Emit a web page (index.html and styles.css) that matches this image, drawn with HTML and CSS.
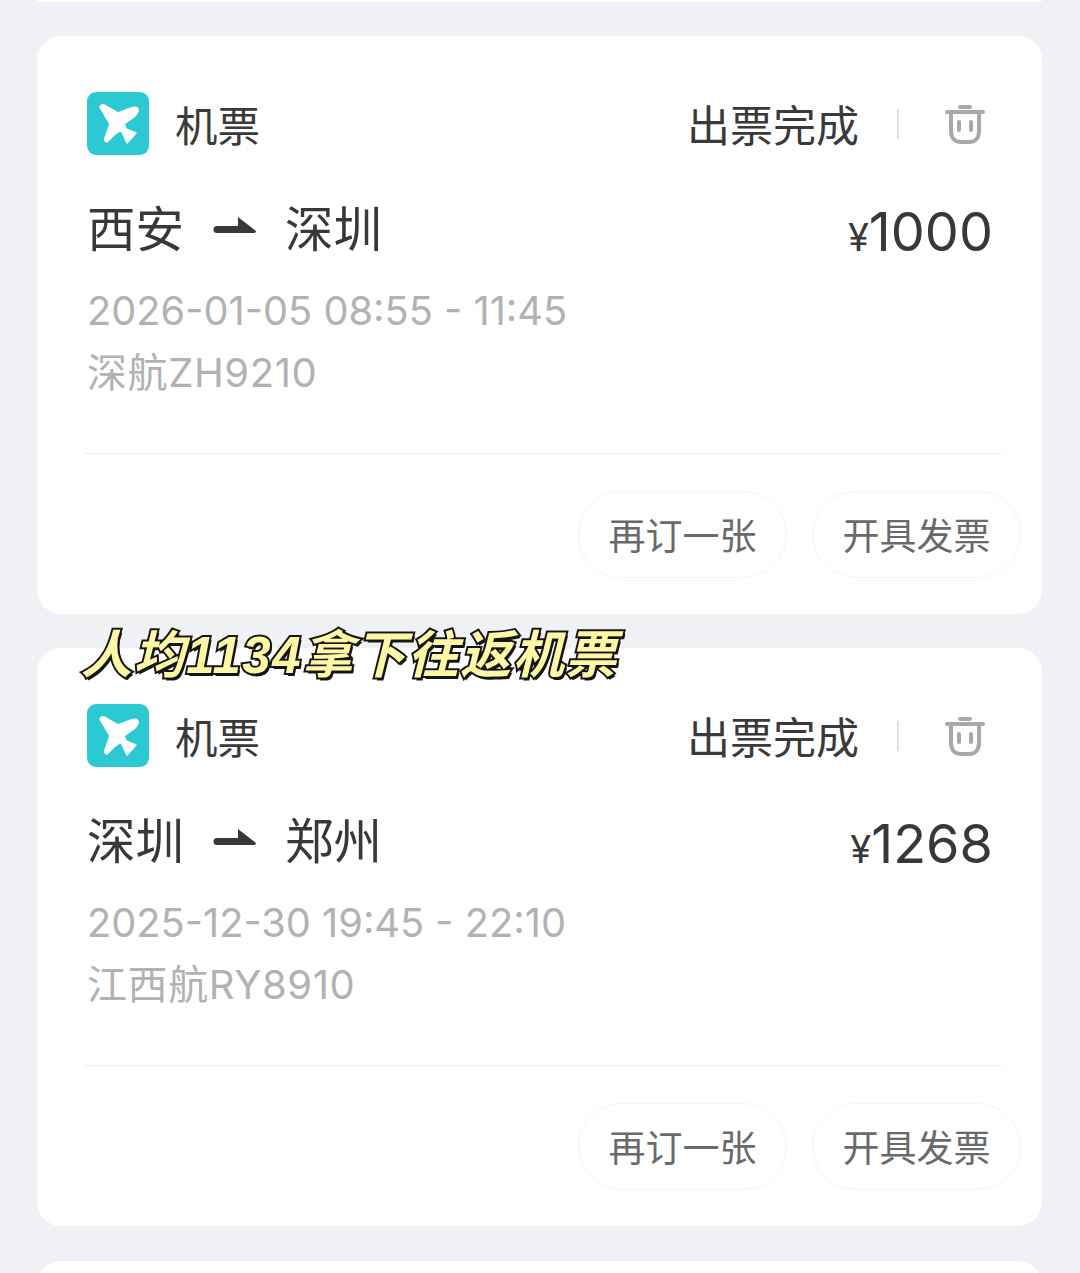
FILE: index.html
```html
<!DOCTYPE html>
<html lang="zh-CN">

<head>
  <meta charset="UTF-8">
  <title>机票订单</title>
  <link rel="stylesheet" href="styles.css">
</head>

<body>
  <div class="page">
    <div class="sliver sliver-top"></div>

    <div class="card">
      <div class="head">
        <svg class="logo" viewBox="0 0 62 63">
          <rect width="62" height="63" rx="9" fill="#2cc9d3" />
          <path class="plane" d="M13 15 Q14 12 17 13 L31 21 L44 16 Q50 14 51 17 Q52 20 47 25 L37 32 L39 37 L49 41 L40 51 L34 38 L27 43 L20 50 Q17 50 18 46 L23 32 Z" />
        </svg>
        <span class="kind">机票</span>
        <span class="status">出票完成</span>
        <i class="vline"></i>
        <svg class="trash" viewBox="0 0 40 40">
          <path d="M2 8 H38 M15 3 H25 M6 8 V27 C6 34 10 38 16 38 H24 C30 38 34 34 34 27 V8" />
          <path d="M14 18 V26 M26 18 V26" />
        </svg>
      </div>
      <div class="route">
        <span class="city">西安</span>
        <svg class="arrow" viewBox="0 0 44 18"><path d="M4 10 H25 V1 L43 15 Q43 17 41 17 H4 A3.5 3.5 0 0 1 4 10 Z" /></svg>
        <span class="city">深圳</span>
        <span class="price"><small>¥</small>1000</span>
      </div>
      <div class="time">2026-01-05 08:55 - 11:45</div>
      <div class="flight">深航ZH9210</div>
      <div class="line"></div>
      <div class="btns">
        <a class="btn">再订一张</a>
        <a class="btn">开具发票</a>
      </div>
    </div>

    <div class="card">
      <div class="head">
        <svg class="logo" viewBox="0 0 62 63">
          <rect width="62" height="63" rx="9" fill="#2cc9d3" />
          <path class="plane" d="M13 15 Q14 12 17 13 L31 21 L44 16 Q50 14 51 17 Q52 20 47 25 L37 32 L39 37 L49 41 L40 51 L34 38 L27 43 L20 50 Q17 50 18 46 L23 32 Z" />
        </svg>
        <span class="kind">机票</span>
        <span class="status">出票完成</span>
        <i class="vline"></i>
        <svg class="trash" viewBox="0 0 40 40">
          <path d="M2 8 H38 M15 3 H25 M6 8 V27 C6 34 10 38 16 38 H24 C30 38 34 34 34 27 V8" />
          <path d="M14 18 V26 M26 18 V26" />
        </svg>
      </div>
      <div class="route">
        <span class="city">深圳</span>
        <svg class="arrow" viewBox="0 0 44 18"><path d="M4 10 H25 V1 L43 15 Q43 17 41 17 H4 A3.5 3.5 0 0 1 4 10 Z" /></svg>
        <span class="city">郑州</span>
        <span class="price"><small>¥</small>1268</span>
      </div>
      <div class="time">2025-12-30 19:45 - 22:10</div>
      <div class="flight">江西航RY8910</div>
      <div class="line"></div>
      <div class="btns">
        <a class="btn">再订一张</a>
        <a class="btn">开具发票</a>
      </div>
    </div>

    <div class="sliver sliver-bottom"></div>

    <div class="caption">人均1134拿下往返机票</div>
  </div>
</body>

</html>
```

FILE: styles.css
```css
* {
  margin: 0;
  padding: 0;
  box-sizing: border-box;
}

html,
body {
  width: 1080px;
  height: 1273px;
  overflow: hidden;
  background-color: #f0f1f5;
}

body {
  font-family: "Noto Sans CJK SC", "Noto Sans", sans-serif;
}

.page {
  position: relative;
  height: 1273px;
  padding: 0 38px 0 37px;
  display: flex;
  flex-direction: column;
  gap: 34px;
}

.sliver {
  background-color: #fff;
  flex: none;
}

.sliver-top {
  height: 2px;
  border-radius: 0 0 24px 24px;
}

.sliver-bottom {
  height: 40px;
  margin-top: 1px;
  border-radius: 24px 24px 0 0;
}

.card {
  flex: none;
  height: 578px;
  background-color: #fff;
  border-radius: 24px;
  padding: 56px 21px 0 50px;
}

.head {
  height: 63px;
  display: flex;
  align-items: center;
}

.logo {
  width: 62px;
  height: 63px;
}

.plane {
  fill: #fff;
  stroke: #fff;
  stroke-width: 1.5;
  stroke-linejoin: round;
}

.kind {
  margin-left: 26px;
  font-size: 42.5px;
  line-height: 63px;
  color: #3a3a3a;
}

.status {
  margin-left: auto;
  font-size: 43px;
  line-height: 63px;
  color: #3a3a3a;
}

.vline {
  width: 2px;
  height: 30px;
  margin: 0 46px 0 38px;
  background-color: #e2e2e2;
}

.trash {
  width: 40px;
  height: 40px;
  margin-right: 36px;
  fill: none;
  stroke: #a8a8a8;
  stroke-width: 4;
  stroke-linecap: round;
}

.route {
  height: 72px;
  margin-top: 35px;
  padding-right: 28px;
  display: flex;
  align-items: center;
  color: #383838;
}

.city {
  font-size: 48.5px;
  line-height: 72px;
}

.arrow {
  width: 44px;
  height: 18px;
  margin: 0 28px 3px 29px;
  fill: #383838;
}

.price {
  margin-left: auto;
  margin-top: 16px;
  font-family: Inter, sans-serif;
  font-size: 54px;
  line-height: 72px;
}

.price small {
  font-size: 38px;
}

.time {
  margin-top: 18px;
  font-family: Inter, sans-serif;
  font-size: 39.75px;
  line-height: 62px;
  color: #b2b2b2;
}

.flight {
  font-family: Inter, "Noto Sans CJK SC", sans-serif;
  font-size: 40px;
  line-height: 62px;
  letter-spacing: 0.6px;
  color: #b2b2b2;
}

.line {
  height: 1px;
  margin: 49px 19px 0 -2px;
  background-color: #ececec;
}

.btns {
  margin-top: 37px;
  display: flex;
  justify-content: flex-end;
  gap: 25px;
}

.btn {
  width: 209px;
  height: 87px;
  border: 1px solid #f4f4f4;
  border-radius: 44px;
  font-size: 37px;
  line-height: 85px;
  text-align: center;
  color: #6a6a6a;
}

.caption {
  position: absolute;
  left: 81px;
  top: 620px;
  font-family: "Liberation Sans", "Noto Sans CJK SC", sans-serif;
  font-size: 51px;
  line-height: 72px;
  font-weight: 700;
  font-style: italic;
  letter-spacing: 1.6px;
  white-space: nowrap;
  color: #fdf7a6;
  -webkit-text-stroke: 4px #151515;
  paint-order: stroke fill;
  text-shadow: 2px 3px 0 #151515;
}
```
